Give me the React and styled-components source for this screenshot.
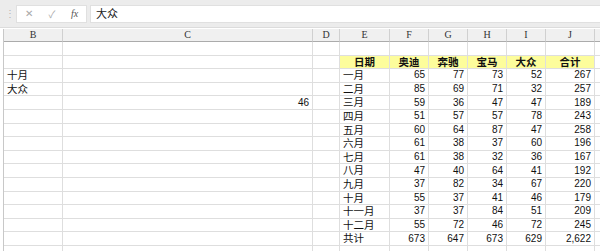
import React from "react";
import styled, { createGlobalStyle } from "styled-components";

const GlobalStyle = createGlobalStyle`
	html, body {
		margin: 0;
		padding: 0;
		background: #fff;
		overflow: hidden;
	}
`;

const Page = styled.div`
	width: 600px;
	height: 251px;
	overflow: hidden;
	font-family: "Liberation Sans", "Noto Sans CJK SC", sans-serif;
	background: #fff;
`;

const FormulaBar = styled.div`
	display: flex;
	align-items: center;
	gap: 3px;
	height: 28px;
	padding-left: 5px;
	background: #ececec;
	border-bottom: 1px solid #dcdcdc;
	box-sizing: border-box;
`;

const Grip = styled.span`
	width: 8px;
	color: #b5b5b5;
	font-size: 10px;
	line-height: 1;
`;

const ButtonBox = styled.div`
	display: flex;
	align-items: center;
	justify-content: space-around;
	width: 71px;
	height: 18px;
	background: #fff;
	border: 1px solid #e0e0e0;
	box-sizing: border-box;
	color: #a8a8a8;
	font-size: 10px;
`;

const FxLabel = styled.span`
	font-family: "Liberation Serif", serif;
	font-style: italic;
	font-size: 10px;
	color: #555;
`;

const FormulaInput = styled.div`
	flex: 1;
	height: 18px;
	display: flex;
	align-items: center;
	padding-left: 5px;
	background: #fff;
	border: 1px solid #e0e0e0;
	border-right: none;
	box-sizing: border-box;
	font-family: "Noto Sans CJK SC", sans-serif;
	font-size: 11px;
	line-height: 1;
	color: #222;
`;

const Sheet = styled.div`
	display: grid;
	grid-template-columns: 59px 250px 27px 50px 39px 39px 39px 39px 49px 1fr;
	grid-template-rows: 13px repeat(16, 13.6px);
	margin-top: 1px;
	margin-left: 3px;
	border-left: 1px solid #c8c8c8;
`;

const ColHead = styled.div`
	display: flex;
	align-items: center;
	justify-content: center;
	background: #f0f0f0;
	border-right: 1px solid #d0d0d0;
	border-bottom: 1px solid #ababab;
	box-sizing: border-box;
	font-family: "Liberation Serif", serif;
	font-size: 10px;
	line-height: 1;
	color: #333;
`;

const Cell = styled.div`
	display: flex;
	align-items: center;
	justify-content: ${(p) =>
		p.$align === "right" ? "flex-end" : p.$align === "center" ? "center" : "flex-start"};
	background: ${(p) => (p.$fill ? "#fdfd9c" : "#fff")};
	border-right: 1px solid #dedede;
	border-bottom: 1px solid #dedede;
	box-sizing: border-box;
	padding: 0 3px;
	font-family: ${(p) =>
		p.$cjk
			? '"Noto Sans CJK SC", sans-serif'
			: '"Liberation Sans", "Noto Sans CJK SC", sans-serif'};
	font-size: ${(p) => (p.$cjk ? "10.5px" : "10px")};
	font-weight: ${(p) => (p.$bold ? 700 : 400)};
	line-height: 1;
	color: #111;
	white-space: nowrap;
	min-width: 0;
`;

const cols = ["B", "C", "D", "E", "F", "G", "H", "I", "J", "K"];
const heads = ["日期", "奥迪", "奔驰", "宝马", "大众", "合计"];
const data = [
	["一月", 65, 77, 73, 52, 267],
	["二月", 85, 69, 71, 32, 257],
	["三月", 59, 36, 47, 47, 189],
	["四月", 51, 57, 57, 78, 243],
	["五月", 60, 64, 87, 47, 258],
	["六月", 61, 38, 37, 60, 196],
	["七月", 61, 38, 32, 36, 167],
	["八月", 47, 40, 64, 41, 192],
	["九月", 37, 82, 34, 67, 220],
	["十月", 55, 37, 41, 46, 179],
	["十一月", 37, 37, 84, 51, 209],
	["十二月", 55, 72, 46, 72, 245],
	["共计", 673, 647, 673, 629, "2,622"],
];

const leftCells = { 2: ["十月", ""], 3: ["大众", ""], 4: ["", "46"] };

const App = () => {
	const rows = [];
	for (let r = 0; r < 16; r++) {
		const left = leftCells[r] || ["", ""];
		const cells = [
			<Cell key="b" $cjk>{left[0]}</Cell>,
			<Cell key="c" $align="right">{left[1]}</Cell>,
			<Cell key="d" />,
		];
		if (r === 1) {
			heads.forEach((h, i) =>
				cells.push(
					<Cell key={"h" + i} $fill $bold $cjk $align="center">
						{h}
					</Cell>
				)
			);
		} else if (r >= 2 && r - 2 < data.length) {
			const d = data[r - 2];
			d.forEach((v, i) =>
				cells.push(
					<Cell key={"v" + i} $cjk={i === 0} $align={i === 0 ? "left" : "right"}>
						{v}
					</Cell>
				)
			);
		} else {
			for (let i = 0; i < 6; i++) cells.push(<Cell key={"e" + i} />);
		}
		cells.push(<Cell key="k" />);
		rows.push(<React.Fragment key={r}>{cells}</React.Fragment>);
	}

	return (
		<Page>
			<GlobalStyle />
			<FormulaBar>
				<Grip>⋮</Grip>
				<ButtonBox>
					<span>✕</span>
					<span>✓</span>
					<FxLabel>fx</FxLabel>
				</ButtonBox>
				<FormulaInput>大众</FormulaInput>
			</FormulaBar>
			<Sheet>
				{cols.map((c) => (
					<ColHead key={c}>{c === "K" ? "" : c}</ColHead>
				))}
				{rows}
			</Sheet>
		</Page>
	);
};

export default App;
